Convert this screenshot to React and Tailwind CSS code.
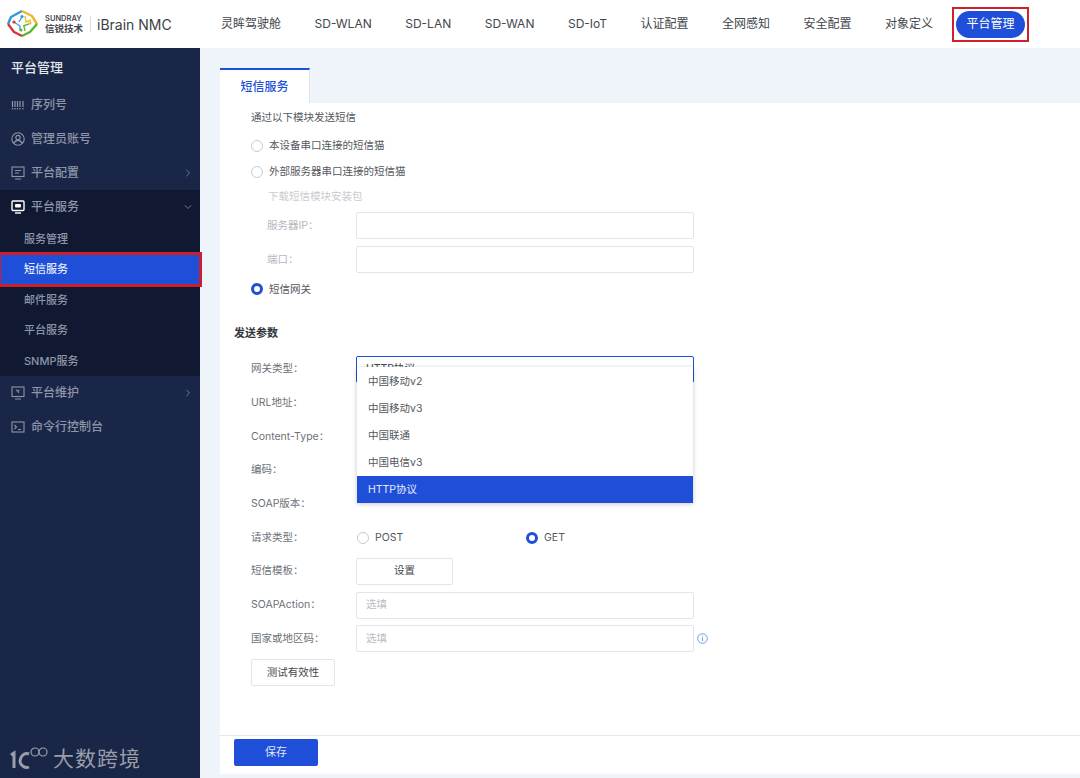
import React from "react";
import { ChevronRight, ChevronDown } from "lucide-react";

const navItems = ["灵眸驾驶舱", "SD-WLAN", "SD-LAN", "SD-WAN", "SD-IoT", "认证配置", "全网感知", "安全配置", "对象定义"];

const Logo = () => (
  <svg width="32" height="30" viewBox="0 0 32 30" fill="none">
    <path d="M16 2 L5 8 L2 15" stroke="#2f9bd8" strokeWidth="2.4" strokeLinejoin="round" />
    <path d="M16 2 L26 7 L31 15" stroke="#f0b52a" strokeWidth="2.4" strokeLinejoin="round" />
    <path d="M31 15 L24 23 L16 27" stroke="#5cb531" strokeWidth="2.4" strokeLinejoin="round" />
    <path d="M2 15 L8 23 L16 27" stroke="#d8343c" strokeWidth="2.4" strokeLinejoin="round" />
    <path d="M16 8 L13 13 M8 13 L14 17 L14 21" stroke="#3aa3dc" strokeWidth="1.4" />
    <path d="M19 7 L20 13 L25 11" stroke="#e8c22e" strokeWidth="1.4" />
    <path d="M17 17 L23 15 M19 22 L18 17" stroke="#69b93a" strokeWidth="1.4" />
    <circle cx="8" cy="13" r="1.6" fill="#d8343c" />
    <circle cx="16" cy="7.5" r="1.6" fill="#2f9bd8" />
    <circle cx="24" cy="14" r="1.6" fill="#e8c22e" />
    <circle cx="15" cy="21" r="1.6" fill="#5cb531" />
  </svg>
);

const BarcodeIcon = () => (
  <svg width="14" height="14" viewBox="0 0 14 14" stroke="currentColor" fill="none">
    <path d="M1.5 3v6M4 3v6M6.5 3v6M9 3v6M12 3v6" strokeWidth="1.2" />
    <path d="M1.5 10v1.5M4 10v1.5M6.5 10v1.5M9 10v1.5M12 10v1.5" strokeWidth="1.2" />
  </svg>
);

const UserIcon = () => (
  <svg width="14" height="14" viewBox="0 0 14 14" stroke="currentColor" fill="none" strokeWidth="1.1">
    <circle cx="7" cy="7" r="6.2" />
    <circle cx="7" cy="5.6" r="2.2" />
    <path d="M3 11.3c.8-2 2.2-2.9 4-2.9s3.200.9 4 2.900" />
  </svg>
);

const ConfigIcon = () => (
  <svg width="14" height="14" viewBox="0 0 14 14" stroke="currentColor" fill="none" strokeWidth="1.1">
    <rect x="1" y="1" width="12" height="9.500" />
    <path d="M4 13h6M4 4.500h6M4 7h4" />
  </svg>
);

const ServiceIcon = () => (
  <svg width="14" height="14" viewBox="0 0 14 14" fill="none">
    <rect x="1" y="1" width="12" height="9.500" rx="1" stroke="#fff" strokeWidth="1.400" />
    <rect x="4" y="4" width="6" height="3.500" rx="1" fill="#fff" />
    <path d="M4 13h6" stroke="#fff" strokeWidth="1.400" />
  </svg>
);

const MaintainIcon = () => (
  <svg width="14" height="14" viewBox="0 0 14 14" stroke="currentColor" fill="none" strokeWidth="1.100">
    <rect x="1" y="1" width="12" height="9.500" />
    <path d="M4 13h6M5 3.500l3 3.500M8.500 4l-2 1.500" />
  </svg>
);

const ConsoleIcon = () => (
  <svg width="14" height="14" viewBox="0 0 14 14" stroke="currentColor" fill="none" strokeWidth="1.100">
    <rect x="1" y="2" width="12" height="10" />
    <path d="M3.500 5l2 2-2 2M7 9.500h3" />
  </svg>
);

const SideRow = ({ icon, label, arrow, active }) => (
  <div className={`h-[34px] flex items-center pl-[11px] pr-[6px] ${active ? "text-white" : "text-[#8d95a8]"}`}>
    <span className="w-[20px] flex items-center">{icon}</span>
    <span className="flex-1 text-[12px] font-medium">{label}</span>
    {arrow === "right" && <ChevronRight size={12} className="text-[#6f7890]" />}
    {arrow === "down" && <ChevronDown size={12} className="text-[#6f7890]" />}
  </div>
);

const SubRow = ({ label, active }) => (
  <div
    className={`h-[30.400px] flex items-center pl-[24px] text-[11px] font-medium ${
      active ? "bg-[#1f4fd8] text-[#e6ebfa] outline-[3px] -outline-offset-1 outline-[#c8202f] relative" : "text-[#8d95a8]"
    }`}
  >
    {label}
  </div>
);

const Radio = ({ checked }) =>
  checked ? (
    <span className="w-[12px] h-[12px] rounded-full border-[3.500px] border-[#1f4fd8] bg-white shrink-0" />
  ) : (
    <span className="w-[12px] h-[12px] rounded-full border border-[#c9ccd3] bg-white shrink-0" />
  );

const Field = ({ label, disabled, children }) => (
  <div className="h-[33.700px] flex items-center">
    <span className={`w-[105px] text-[10.500px] ${disabled ? "text-[#b4b7bd]" : "text-[#6d7178]"}`}>{label}</span>
    {children}
  </div>
);

const Input = ({ placeholder }) => (
  <div className="w-[338px] h-[27px] border border-[#e3e5ea] rounded-[2px] bg-white flex items-center px-[9px] text-[10.500px] text-[#b9bcc2]">
    {placeholder}
  </div>
);

const RadioLine = ({ label, checked }) => (
  <div className="h-[26px] flex items-center gap-[6px] text-[10.500px] text-[#55585e]">
    <Radio checked={checked} />
    <span>{label}</span>
  </div>
);

export default function App() {
  return (
    <div
      className="w-[1080px] h-[778px] overflow-hidden flex flex-col bg-[#eff3fa]"
      style={{ fontFamily: 'Inter, "Noto Sans CJK SC", sans-serif' }}
    >
      {/* Top bar */}
      <header className="h-[48px] bg-white flex items-center shrink-0">
        <div className="w-[221px] flex items-center pl-[6px]">
          <Logo />
          <div className="ml-[7px] leading-none text-[#444851] font-semibold">
            <div className="text-[7.500px]">SUNDRAY</div>
            <div className="text-[9.500px] mt-[1px]">信锐技术</div>
          </div>
          <span className="ml-[7px] w-px h-[16px] bg-[#d9dbe0]" />
          <span className="ml-[6px] text-[14px] text-[#3d4048] whitespace-nowrap">iBrain NMC</span>
        </div>
        <nav className="flex items-center gap-[33.500px] text-[12px] text-[#43464d] whitespace-nowrap">
          {navItems.map((item) => (
            <span key={item}>{item}</span>
          ))}
        </nav>
        <div className="ml-[19px] w-[77px] h-[35px] p-[2px] border-2 border-[#d0202e]">
          <div className="w-full h-full rounded-[14px] bg-[#1f4fd8] text-white text-[12px] flex items-center justify-center">
            平台管理
          </div>
        </div>
      </header>

      <div className="flex-1 flex min-h-0">
        {/* Sidebar */}
        <aside className="w-[200px] bg-[#1a2647] relative shrink-0">
          <div className="h-[40px] flex items-center pl-[11px] text-[13px] font-medium text-[#e4e7ee]">平台管理</div>
          <SideRow icon={<BarcodeIcon />} label="序列号" />
          <SideRow icon={<UserIcon />} label="管理员账号" />
          <SideRow icon={<ConfigIcon />} label="平台配置" arrow="right" />
          <div className="bg-[#111932]">
            <SideRow icon={<ServiceIcon />} label="平台服务" arrow="down" />
            <SubRow label="服务管理" />
            <SubRow label="短信服务" active />
            <SubRow label="邮件服务" />
            <SubRow label="平台服务" />
            <SubRow label="SNMP服务" />
          </div>
          <SideRow icon={<MaintainIcon />} label="平台维护" arrow="right" />
          <SideRow icon={<ConsoleIcon />} label="命令行控制台" />
          {/* watermark */}
          <div className="absolute left-[10px] bottom-[7px] flex items-end text-[#9a9ea8]">
            <svg width="42" height="24" viewBox="0 0 42 24" fill="none" stroke="currentColor">
              <path d="M1 8l3-2v15" strokeWidth="3" />
              <path d="M19 7c-5-2-9 3-9 7s5 8 9 6" strokeWidth="3" />
              <circle cx="25" cy="5" r="4" strokeWidth="1.200" />
              <circle cx="33" cy="5" r="4" strokeWidth="1.200" />
            </svg>
            <span className="ml-[1px] text-[21px] leading-[25px] tracking-[1px]">大数跨境</span>
          </div>
        </aside>

        {/* Main */}
        <main className="flex-1 flex flex-col pl-[20px] pt-[20px] min-w-0">
          <div className="w-[90px] h-[35px] bg-white border-t-2 border-[#1f4fd8] border-r border-r-[#e3e5ea] flex items-center justify-center text-[12px] font-medium text-[#1f4fd8] shrink-0">
            短信服务
          </div>
          <div className="flex-1 bg-white pl-[31px] relative">
            <div className="h-[30px] flex items-center text-[10.500px] text-[#55585e]">通过以下模块发送短信</div>
            <RadioLine label="本设备串口连接的短信猫" />
            <RadioLine label="外部服务器串口连接的短信猫" />
            <div className="h-[24px] pl-[17px] flex items-center text-[10.500px] text-[#c9cbd0]">下载短信模块安装包</div>
            <div className="pl-[16px]">
              <div className="flex items-center h-[33.700px]">
                <span className="w-[89px] text-[10.500px] text-[#b4b7bd]">服务器IP：</span>
                <Input />
              </div>
              <div className="flex items-center h-[33.700px]">
                <span className="w-[89px] text-[10.500px] text-[#b4b7bd]">端口：</span>
                <Input />
              </div>
            </div>
            <RadioLine label="短信网关" checked />
            <div className="-ml-[17px] h-[50px] pt-[12px] flex items-center text-[11px] font-semibold text-[#33363c]">发送参数</div>

            <Field label="网关类型：">
              <div className="w-[338px] h-[27px] border border-[#1f4fd8] rounded-[2px] flex items-center justify-between pl-[9px] pr-[8px] text-[10.500px] text-[#44474d]">
                <span>HTTP协议</span>
                <svg width="7" height="4" viewBox="0 0 7 4">
                  <path d="M0 0h7L3.500 4z" fill="#33363c" />
                </svg>
              </div>
            </Field>
            <Field label="URL地址：" />
            <Field label="Content-Type：" />
            <Field label="编码：" />
            <Field label="SOAP版本：" />
            <Field label="请求类型：">
              <div className="flex items-center w-[338px] pl-[1px]">
                <div className="w-[169px] flex items-center gap-[6px] text-[10.500px] text-[#55585e]">
                  <Radio />
                  <span>POST</span>
                </div>
                <div className="flex items-center gap-[6px] text-[10.500px] text-[#55585e]">
                  <Radio checked />
                  <span>GET</span>
                </div>
              </div>
            </Field>
            <Field label="短信模板：">
              <div className="w-[97px] h-[27px] border border-[#e3e5ea] rounded-[2px] flex items-center justify-center text-[10.500px] text-[#44474d]">
                设置
              </div>
            </Field>
            <Field label="SOAPAction：">
              <Input placeholder="选填" />
            </Field>
            <Field label="国家或地区码：">
              <Input placeholder="选填" />
              <svg className="ml-[3px]" width="11" height="11" viewBox="0 0 11 11" fill="none" stroke="#6f9be8">
                <circle cx="5.500" cy="5.500" r="4.800" />
                <path d="M5.500 4.500v3.500M5.500 2.500v1" />
              </svg>
            </Field>
            <div className="h-[33.700px] flex items-center">
              <div className="w-[84px] h-[27px] border border-[#e3e5ea] rounded-[2px] flex items-center justify-center text-[10.500px] text-[#44474d]">
                测试有效性
              </div>
            </div>

            {/* Open dropdown */}
            <div className="absolute left-[137px] top-[264px] w-[336px] h-[136px] bg-white rounded-[2px] shadow-[0_1px_5px_rgba(0,0,0,0.22)] flex flex-col justify-end text-[10.500px] text-[#55585e]">
              <div className="h-[27px] flex items-center pl-[11px]">中国移动v2</div>
              <div className="h-[27px] flex items-center pl-[11px]">中国移动v3</div>
              <div className="h-[27px] flex items-center pl-[11px]">中国联通</div>
              <div className="h-[27px] flex items-center pl-[11px]">中国电信v3</div>
              <div className="h-[27px] flex items-center pl-[11px] bg-[#1f4fd8] text-[#e6ebfa]">HTTP协议</div>
            </div>
          </div>
          <div className="h-[39px] bg-white border-t border-[#e6e8ec] pl-[14px] pt-[3px] mb-[4px] shrink-0">
            <div className="w-[84px] h-[27px] rounded-[2px] bg-[#1f4fd8] text-[#dfe6fa] text-[11px] flex items-center justify-center">
              保存
            </div>
          </div>
        </main>
      </div>
    </div>
  );
}
